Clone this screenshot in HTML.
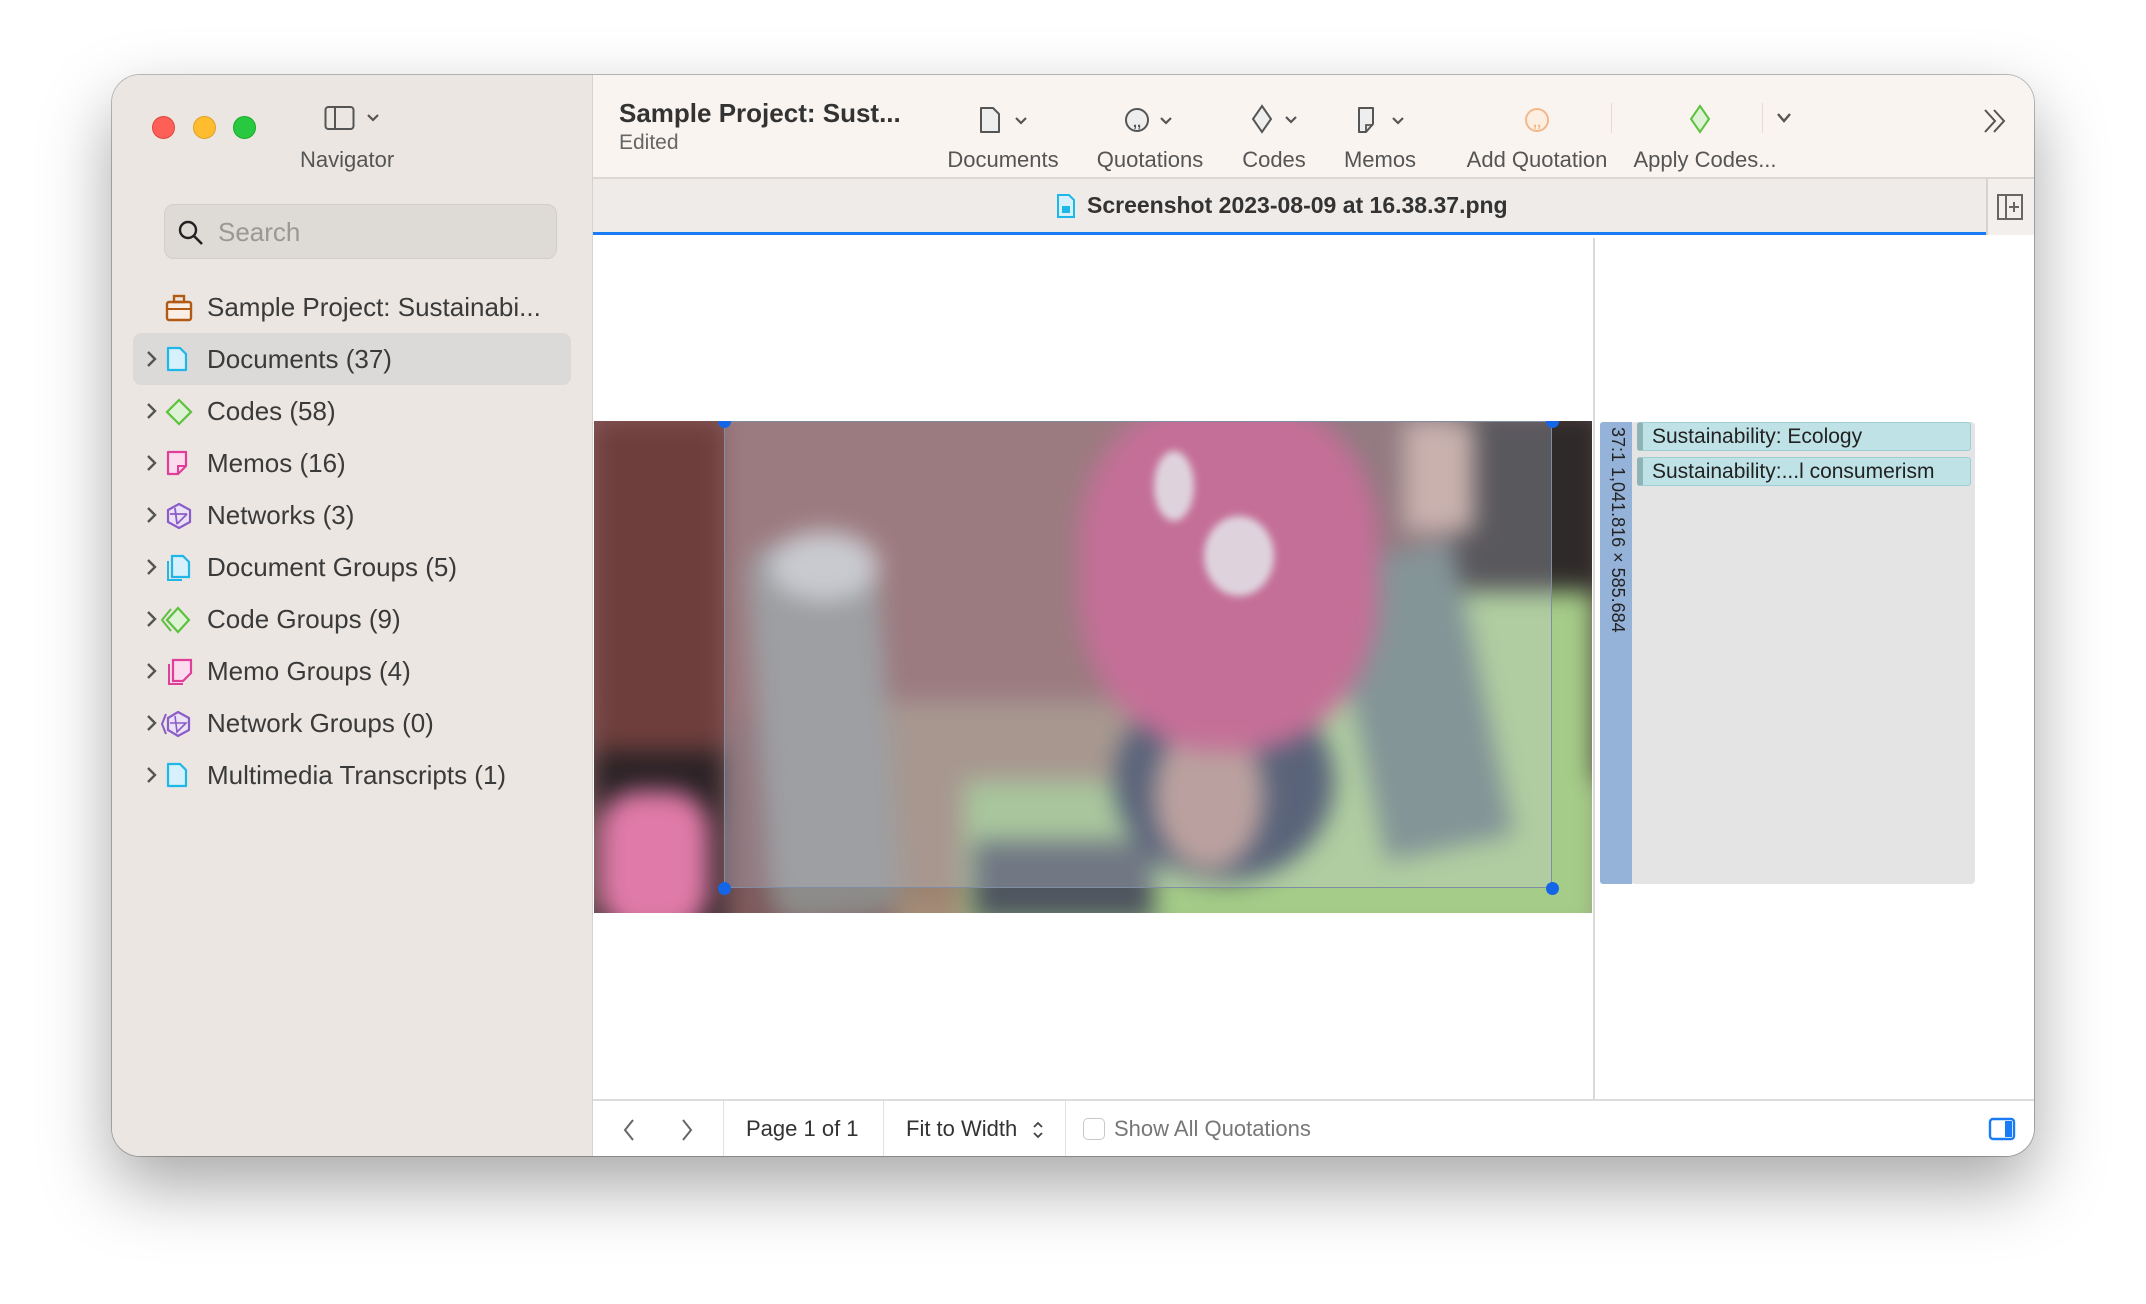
<!DOCTYPE html>
<html><head><meta charset="utf-8"><style>
*{box-sizing:border-box;margin:0;padding:0}
body{width:2146px;height:1304px;background:#fff;font-family:"Liberation Sans",sans-serif;position:relative;overflow:hidden;color:#333}
.win{position:absolute;left:112px;top:75px;width:1922px;height:1081px;border-radius:28px;overflow:hidden;background:#fff;box-shadow:0 30px 70px rgba(0,0,0,.35),0 0 0 1px rgba(0,0,0,.25)}
.side{position:absolute;left:0;top:0;width:481px;height:100%;background:#ebe6e2;border-right:1px solid #d6d2ce}
.abs{position:absolute}
.tl{position:absolute;top:41px;width:23px;height:23px;border-radius:50%}
.row{position:absolute;left:21px;width:438px;height:52px;font-size:26px;color:#3a3a3a;line-height:52px}
.row .chev{position:absolute;left:12px;top:17px}
.row .ic{position:absolute;left:32px;top:13px}
.row .t{position:absolute;left:74px}
.tb{position:absolute;left:481px;top:0;right:0;height:104px;background:#faf4f0;border-bottom:2px solid #dcd7d3}
.lab{position:absolute;top:72px;font-size:22px;color:#555;transform:translateX(-50%);white-space:nowrap}
.tab{position:absolute;left:481px;top:104px;right:0;height:56px;background:#efebe8;border-bottom:3px solid #1a7cf5}
.foot{position:absolute;left:481px;right:0;top:1024px;height:57px;background:#fff;border-top:2px solid #dcdcdc;font-size:22px;color:#333}
.sep{position:absolute;top:0;width:1px;height:57px;background:#e2e2e2}
.b{position:absolute;border-radius:50%}
</style></head><body>
<div class="win">
 <div class="side">
  <div class="tl" style="left:40px;background:#fe5f57;border:1px solid #e0443e"></div>
  <div class="tl" style="left:81px;background:#febc2e;border:1px solid #dea123"></div>
  <div class="tl" style="left:121px;background:#28c840;border:1px solid #1aab29"></div>
  <svg class="abs" style="left:212px;top:30px" width="60" height="26" viewBox="0 0 60 26"><rect x="1.5" y="2" width="28" height="22" rx="3" fill="none" stroke="#555" stroke-width="2"/><line x1="11" y1="2" x2="11" y2="24" stroke="#555" stroke-width="2"/><path d="M44 10 l5 5 l5 -5" fill="none" stroke="#555" stroke-width="2.2"/></svg>
  <div class="abs" style="left:188px;top:72px;font-size:22px;color:#555">Navigator</div>
  <div class="abs" style="left:52px;top:129px;width:393px;height:55px;border-radius:10px;background:#dedad6;border:1px solid #d2cecb"></div>
  <svg class="abs" style="left:65px;top:144px" width="28" height="28" viewBox="0 0 28 28"><circle cx="11" cy="11" r="8" fill="none" stroke="#222" stroke-width="2.4"/><line x1="17" y1="17" x2="25" y2="25" stroke="#222" stroke-width="2.6"/></svg>
  <div class="abs" style="left:106px;top:142px;font-size:26px;color:#9a9795">Search</div>
  <div class="row" style="top:206px"><svg class="ic" style="left:32px" width="28" height="28" viewBox="0 0 28 28"><rect x="2" y="8" width="24" height="18" rx="2" fill="#fbeee4" stroke="#b25a14" stroke-width="2.4"/><rect x="9" y="2" width="10" height="6" fill="none" stroke="#b25a14" stroke-width="2.4"/><line x1="2" y1="15" x2="26" y2="15" stroke="#b25a14" stroke-width="2"/></svg><span class="t">Sample Project: Sustainabi...</span></div>
  <div class="abs" style="left:21px;top:258px;width:438px;height:52px;border-radius:8px;background:#dcdad8"></div>
  <div class="row" style="top:258px"><svg class="chev" width="12" height="18" viewBox="0 0 12 18"><path d="M3 2 L10 9 L3 16" fill="none" stroke="#555" stroke-width="2.4"/></svg><svg class="ic" width="24" height="26" viewBox="0 0 24 26"><path d="M3 2h12l6 6v16H3z" fill="#d6f1fb" stroke="#1fb6e8" stroke-width="2.2" stroke-linejoin="round"/></svg><span class="t">Documents (37)</span></div>
  <div class="row" style="top:310px"><svg class="chev" width="12" height="18" viewBox="0 0 12 18"><path d="M3 2 L10 9 L3 16" fill="none" stroke="#555" stroke-width="2.4"/></svg><svg class="ic" width="28" height="28" viewBox="0 0 28 28"><path d="M14 2 L26 14 L14 26 L2 14Z" fill="#def3d6" stroke="#5cc13e" stroke-width="2.2"/></svg><span class="t">Codes (58)</span></div>
  <div class="row" style="top:362px"><svg class="chev" width="12" height="18" viewBox="0 0 12 18"><path d="M3 2 L10 9 L3 16" fill="none" stroke="#555" stroke-width="2.4"/></svg><svg class="ic" width="24" height="26" viewBox="0 0 24 26"><path d="M3 2h18v14l-8 8H3z" fill="#fbdcee" stroke="#e13d9a" stroke-width="2.2" stroke-linejoin="round"/><path d="M13 24v-8h8" fill="none" stroke="#e13d9a" stroke-width="2"/></svg><span class="t">Memos (16)</span></div>
  <div class="row" style="top:414px"><svg class="chev" width="12" height="18" viewBox="0 0 12 18"><path d="M3 2 L10 9 L3 16" fill="none" stroke="#555" stroke-width="2.4"/></svg><svg class="ic" width="28" height="28" viewBox="0 0 28 28"><path d="M14 2 L25 8 L25 20 L14 26 L3 20 L3 8Z" fill="#ece2f7" stroke="#8a5cc7" stroke-width="2.2"/><path d="M10 6 L12 22 M12 22 L22 12 M5 12 L22 12" stroke="#8a5cc7" stroke-width="1.8" fill="none"/></svg><span class="t">Networks (3)</span></div>
  <div class="row" style="top:466px"><svg class="chev" width="12" height="18" viewBox="0 0 12 18"><path d="M3 2 L10 9 L3 16" fill="none" stroke="#555" stroke-width="2.4"/></svg><svg class="ic" width="26" height="28" viewBox="0 0 26 28"><path d="M7 2h11l6 6v15H7z" fill="#d6f1fb" stroke="#1fb6e8" stroke-width="2.2"/><path d="M3 7v19h14" fill="none" stroke="#1fb6e8" stroke-width="2"/></svg><span class="t">Document Groups (5)</span></div>
  <div class="row" style="top:518px"><svg class="chev" width="12" height="18" viewBox="0 0 12 18"><path d="M3 2 L10 9 L3 16" fill="none" stroke="#555" stroke-width="2.4"/></svg><svg class="ic" style="left:28px" width="30" height="28" viewBox="0 0 30 28"><path d="M17 2 L28 14 L17 26 L6 14Z" fill="#def3d6" stroke="#5cc13e" stroke-width="2.2"/><path d="M10 3 L1 14 L10 25" fill="none" stroke="#5cc13e" stroke-width="2"/></svg><span class="t">Code Groups (9)</span></div>
  <div class="row" style="top:570px"><svg class="chev" width="12" height="18" viewBox="0 0 12 18"><path d="M3 2 L10 9 L3 16" fill="none" stroke="#555" stroke-width="2.4"/></svg><svg class="ic" width="28" height="28" viewBox="0 0 28 28"><path d="M8 2h18v13l-8 8H8z" fill="#fbdcee" stroke="#e13d9a" stroke-width="2.2"/><path d="M4 6v20h14" fill="none" stroke="#e13d9a" stroke-width="2"/></svg><span class="t">Memo Groups (4)</span></div>
  <div class="row" style="top:622px"><svg class="chev" width="12" height="18" viewBox="0 0 12 18"><path d="M3 2 L10 9 L3 16" fill="none" stroke="#555" stroke-width="2.4"/></svg><svg class="ic" style="left:28px" width="30" height="28" viewBox="0 0 30 28"><path d="M17 2 L28 8 L28 20 L17 26 L7 20 L7 8Z" fill="#ece2f7" stroke="#8a5cc7" stroke-width="2.2"/><path d="M5 4 L1 14 L5 24" fill="none" stroke="#8a5cc7" stroke-width="2"/><path d="M14 6 L16 22 L25 13 L9 13" stroke="#8a5cc7" stroke-width="1.6" fill="none"/></svg><span class="t">Network Groups (0)</span></div>
  <div class="row" style="top:674px"><svg class="chev" width="12" height="18" viewBox="0 0 12 18"><path d="M3 2 L10 9 L3 16" fill="none" stroke="#555" stroke-width="2.4"/></svg><svg class="ic" width="24" height="26" viewBox="0 0 24 26"><path d="M3 2h12l6 6v16H3z" fill="#d6f1fb" stroke="#1fb6e8" stroke-width="2.2" stroke-linejoin="round"/></svg><span class="t">Multimedia Transcripts (1)</span></div>
 </div>
 <div class="tb">
  <div class="abs" style="left:26px;top:23px;font-size:26px;font-weight:bold;color:#333">Sample Project: Sust...</div>
  <div class="abs" style="left:26px;top:56px;font-size:21px;color:#666">Edited</div>
  <svg class="abs" style="left:385px;top:30px" width="60" height="30" viewBox="0 0 60 30"><path d="M3 3h12l6 6v18H3z" fill="#eee" stroke="#555" stroke-width="2" stroke-linejoin="round"/><path d="M38 13 l5 5 l5 -5" fill="none" stroke="#555" stroke-width="2.2"/></svg>
  <svg class="abs" style="left:530px;top:30px" width="60" height="30" viewBox="0 0 60 30"><circle cx="14" cy="15" r="11" fill="#eee" stroke="#555" stroke-width="2"/><text x="14" y="22" font-size="15" font-weight="bold" text-anchor="middle" fill="#555" font-family="Liberation Sans">,,</text><path d="M38 13 l5 5 l5 -5" fill="none" stroke="#555" stroke-width="2.2"/></svg>
  <svg class="abs" style="left:655px;top:28px" width="60" height="32" viewBox="0 0 60 32"><path d="M14 3 L23 16 L14 29 L5 16Z" fill="#eee" stroke="#555" stroke-width="2"/><path d="M38 14 l5 5 l5 -5" fill="none" stroke="#555" stroke-width="2.2"/></svg>
  <svg class="abs" style="left:762px;top:30px" width="60" height="30" viewBox="0 0 60 30"><path d="M4 3h14v16l-7 8H4z" fill="#eee" stroke="#555" stroke-width="2" stroke-linejoin="round"/><path d="M11 27v-7h7" fill="none" stroke="#555" stroke-width="1.8"/><path d="M38 13 l5 5 l5 -5" fill="none" stroke="#555" stroke-width="2.2"/></svg>
  <svg class="abs" style="left:930px;top:30px" width="28" height="30" viewBox="0 0 28 30"><circle cx="14" cy="15" r="11" fill="#fdeee2" stroke="#f2b88a" stroke-width="2"/><text x="14" y="22" font-size="15" font-weight="bold" text-anchor="middle" fill="#f2b88a" font-family="Liberation Sans">,,</text></svg>
  <div class="abs" style="left:1018px;top:28px;width:1px;height:30px;background:#e4dcd6"></div>
  <svg class="abs" style="left:1092px;top:28px" width="30" height="32" viewBox="0 0 30 32"><path d="M15 3 L24 16 L15 29 L6 16Z" fill="#def3d6" stroke="#5cc13e" stroke-width="2"/></svg>
  <div class="abs" style="left:1169px;top:28px;width:1px;height:30px;background:#e4dcd6"></div>
  <svg class="abs" style="left:1181px;top:36px" width="20" height="14" viewBox="0 0 20 14"><path d="M4 3 l6 7 l6 -7" fill="none" stroke="#555" stroke-width="2.4"/></svg>
  <svg class="abs" style="left:1388px;top:32px" width="28" height="28" viewBox="0 0 28 28"><path d="M4 3 l10 11 l-10 11 M13 3 l10 11 l-10 11" fill="none" stroke="#555" stroke-width="2"/></svg>
  <div class="lab" style="left:410px">Documents</div>
  <div class="lab" style="left:557px">Quotations</div>
  <div class="lab" style="left:681px">Codes</div>
  <div class="lab" style="left:787px">Memos</div>
  <div class="lab" style="left:944px">Add Quotation</div>
  <div class="lab" style="left:1112px">Apply Codes...</div>
 </div>
 <div class="tab">
  <svg class="abs" style="left:462px;top:14px" width="22" height="26" viewBox="0 0 22 26"><path d="M3 2h11l5 5v17H3z" fill="#d6f1fb" stroke="#1fb6e8" stroke-width="2"/><rect x="7" y="13" width="8" height="7" fill="#1fb6e8"/></svg>
  <div class="abs" style="left:494px;top:13px;font-size:23px;font-weight:bold;color:#333">Screenshot 2023-08-09 at 16.38.37.png</div>
  <div class="abs" style="right:0;top:0;width:48px;height:56px;background:#f2efed;border-left:2px solid #d6d2ce"></div>
  <svg class="abs" style="right:10px;top:14px" width="28" height="28" viewBox="0 0 28 28"><rect x="2" y="2" width="24" height="24" fill="none" stroke="#666" stroke-width="2"/><line x1="10" y1="2" x2="10" y2="26" stroke="#666" stroke-width="2"/><path d="M18 9v10M13 14h10" stroke="#666" stroke-width="2"/></svg>
 </div>
 <div class="abs" style="left:1481px;top:163px;width:2px;height:861px;background:#d8d8d8"></div>
 <!-- photo -->
 <div class="abs" style="left:482px;top:346px;width:998px;height:492px;overflow:hidden;background:#7e5a5c">
  <div class="abs" style="left:0;top:0;width:998px;height:492px;filter:blur(12px)">
   <div class="abs" style="left:-20px;top:-20px;width:600px;height:320px;background:#8a5a5b"></div>
   <div class="abs" style="left:0;top:0;width:130px;height:492px;background:#6e3e3c"></div>
   <div class="abs" style="left:300px;top:420px;width:350px;height:100px;background:#a58d78"></div>
   <div class="abs" style="left:280px;top:280px;width:300px;height:200px;background:#9a8270"></div>
   <div class="abs" style="left:0;top:330px;width:130px;height:180px;background:#2a2225"></div>
   <div class="abs" style="left:5px;top:370px;width:110px;height:140px;background:#e07aa8;border-radius:40px"></div>
   <div class="abs" style="left:165px;top:120px;width:130px;height:380px;background:#8d8c8a;border-radius:30px;transform:rotate(-4deg)"></div>
   <div class="abs" style="left:175px;top:110px;width:110px;height:70px;background:#c8c8c8;border-radius:50%"></div>
   <div class="abs" style="left:860px;top:-10px;width:150px;height:420px;background:#2f2a2a"></div>
   <div class="abs" style="left:810px;top:0;width:70px;height:110px;background:#c9a69a"></div>
   <div class="abs" style="left:370px;top:360px;width:640px;height:160px;background:#9cc283"></div>
   <div class="abs" style="left:560px;top:170px;width:440px;height:330px;background:#a5cc88;border-radius:60px 0 0 0"></div>
   <div class="abs" style="left:760px;top:130px;width:130px;height:300px;background:#6a7e7b;transform:rotate(-12deg)"></div>
   <div class="abs" style="left:380px;top:420px;width:180px;height:80px;background:#4f5660"></div>
   <div class="abs" style="left:520px;top:260px;width:220px;height:200px;background:#2f3a52;border-radius:50%"></div>
   <div class="abs" style="left:560px;top:300px;width:110px;height:150px;background:#b58f85;border-radius:50%"></div>
   <div class="abs" style="left:485px;top:-20px;width:300px;height:350px;background:#c34a7b;border-radius:40% 40% 45% 45%"></div>
  </div>
  <div class="abs" style="left:560px;top:30px;width:40px;height:70px;background:#eee;border-radius:50%;filter:blur(4px);opacity:.85"></div>
  <div class="abs" style="left:610px;top:95px;width:70px;height:80px;background:#eee;border-radius:50%;filter:blur(4px);opacity:.85"></div>
  <div class="abs" style="left:130px;top:0;width:828px;height:467px;background:rgba(200,210,225,.28);border:1px solid #7e8ca4"></div>
  <div class="b" style="left:124px;top:-6px;width:13px;height:13px;background:#1466e6"></div>
  <div class="b" style="left:952px;top:-6px;width:13px;height:13px;background:#1466e6"></div>
  <div class="b" style="left:124px;top:461px;width:13px;height:13px;background:#1466e6"></div>
  <div class="b" style="left:952px;top:461px;width:13px;height:13px;background:#1466e6"></div>
 </div>
 <!-- margin -->
 <div class="abs" style="left:1519px;top:347px;width:344px;height:462px;background:#e4e4e4;border-radius:4px"></div>
 <div class="abs" style="left:1488px;top:347px;width:32px;height:462px;background:#95b2d8;border-radius:3px 0 0 3px"></div>
 <div class="abs" style="left:1492px;top:352px;width:440px;height:24px;font-size:18px;color:#222;transform-origin:0 0;transform:translate(24px,0) rotate(90deg);white-space:nowrap">37:1 1,041.816 × 585.684</div>
 <div class="abs" style="left:1525px;top:347px;width:334px;height:29px;background:#bfe2e6;border:1px solid #9ccfd4;border-left:6px solid #8fb2b5;border-radius:3px;font-size:21px;line-height:27px;padding-left:9px;color:#222">Sustainability: Ecology</div>
 <div class="abs" style="left:1525px;top:382px;width:334px;height:29px;background:#bfe2e6;border:1px solid #9ccfd4;border-left:6px solid #8fb2b5;border-radius:3px;font-size:21px;line-height:27px;padding-left:9px;color:#222">Sustainability:...l consumerism</div>
 <div class="foot">
  <svg class="abs" style="left:29px;top:17px" width="14" height="24" viewBox="0 0 14 24"><path d="M11 2 L3 12 L11 22" fill="none" stroke="#666" stroke-width="2"/></svg>
  <svg class="abs" style="left:87px;top:17px" width="14" height="24" viewBox="0 0 14 24"><path d="M3 2 L11 12 L3 22" fill="none" stroke="#666" stroke-width="2"/></svg>
  <div class="sep" style="left:130px"></div>
  <div class="abs" style="left:153px;top:15px">Page 1 of 1</div>
  <div class="sep" style="left:290px"></div>
  <div class="abs" style="left:313px;top:15px">Fit to Width</div>
  <svg class="abs" style="left:439px;top:19px" width="12" height="20" viewBox="0 0 12 20"><path d="M2 7 L6 3 L10 7 M2 13 L6 17 L10 13" fill="none" stroke="#444" stroke-width="1.8"/></svg>
  <div class="sep" style="left:472px"></div>
  <div class="abs" style="left:490px;top:17px;width:22px;height:22px;border:1.5px solid #c8c8c8;border-radius:5px"></div>
  <div class="abs" style="left:521px;top:15px;color:#777">Show All Quotations</div>
  <svg class="abs" style="left:1395px;top:16px" width="28" height="24" viewBox="0 0 28 24"><rect x="2" y="2" width="24" height="20" rx="3" fill="none" stroke="#1a7cf5" stroke-width="2.4"/><rect x="17" y="4" width="7" height="16" fill="#1a7cf5"/></svg>
 </div>
</div>
</body></html>
